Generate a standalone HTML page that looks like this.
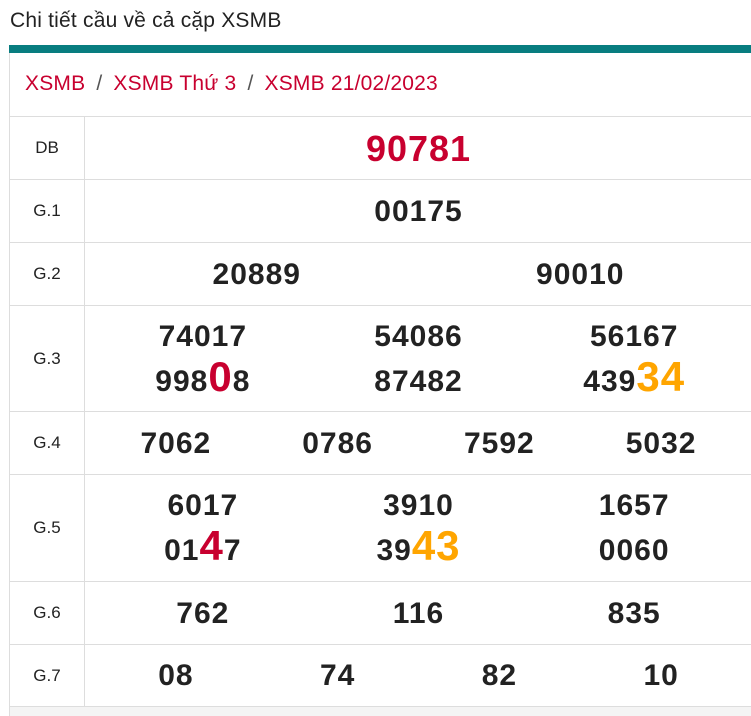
<!DOCTYPE html>
<html><head><meta charset="utf-8"><style>
*{margin:0;padding:0;box-sizing:border-box}
body{width:751px;height:716px;background:#fff;font-family:"Liberation Sans",Arial,sans-serif;color:#222;position:relative;overflow:hidden}
.title{position:absolute;left:10px;top:9px;font-size:21px;color:#222;letter-spacing:0.2px}
.bar{position:absolute;left:9px;top:45px;width:742px;height:8px;background:#087d80}
.box{position:absolute;left:9px;top:53px;width:742px;height:663px;border-left:1px solid #ddd;background:#fff}
.bc{position:absolute;left:15px;top:19px;font-size:21px;color:#c8002f;white-space:nowrap;letter-spacing:0.2px}
.bc span{color:#555;margin:0 11px}
.row{position:absolute;left:0;width:742px;border-top:1px solid #ddd;display:flex}
.lab{width:75px;border-right:1px solid #ddd;display:flex;align-items:center;justify-content:center;font-size:17px;color:#222}
.val{flex:1;display:flex;padding:0 10px;align-items:center}
.c{flex:1;text-align:center;font-weight:bold;font-size:30px;line-height:45px;color:#222;letter-spacing:1px}
.r{color:#c8002f}.o{color:#ffa500}
.big{font-size:42px;line-height:0}
.bot{position:absolute;left:0;top:653px;width:742px;height:10px;background:#f4f4f4;border-top:1px solid #ddd}
</style></head><body>
<div class="title">Chi tiết cầu về cả cặp XSMB</div>
<div class="bar"></div>
<div class="box">
<div class="bc">XSMB<span>/</span>XSMB Thứ 3<span>/</span>XSMB 21/02/2023</div>
<div class="row" style="top:63px;height:63px"><div class="lab">DB</div><div class="val"><div class="c r" style="font-size:36px">90781</div></div></div>
<div class="row" style="top:126px;height:63px"><div class="lab">G.1</div><div class="val"><div class="c">00175</div></div></div>
<div class="row" style="top:189px;height:63px"><div class="lab">G.2</div><div class="val"><div class="c">20889</div><div class="c">90010</div></div></div>
<div class="row" style="top:252px;height:106px"><div class="lab">G.3</div><div class="val"><div class="c">74017<br>998<span class="r big">0</span>8</div><div class="c">54086<br>87482</div><div class="c">56167<br>439<span class="o big">34</span></div></div></div>
<div class="row" style="top:358px;height:63px"><div class="lab">G.4</div><div class="val"><div class="c">7062</div><div class="c">0786</div><div class="c">7592</div><div class="c">5032</div></div></div>
<div class="row" style="top:421px;height:107px"><div class="lab">G.5</div><div class="val"><div class="c">6017<br>01<span class="r big">4</span>7</div><div class="c">3910<br>39<span class="o big">43</span></div><div class="c">1657<br>0060</div></div></div>
<div class="row" style="top:528px;height:63px"><div class="lab">G.6</div><div class="val"><div class="c">762</div><div class="c">116</div><div class="c">835</div></div></div>
<div class="row" style="top:591px;height:62px"><div class="lab">G.7</div><div class="val"><div class="c">08</div><div class="c">74</div><div class="c">82</div><div class="c">10</div></div></div>
<div class="bot"></div>
</div>
</body></html>
